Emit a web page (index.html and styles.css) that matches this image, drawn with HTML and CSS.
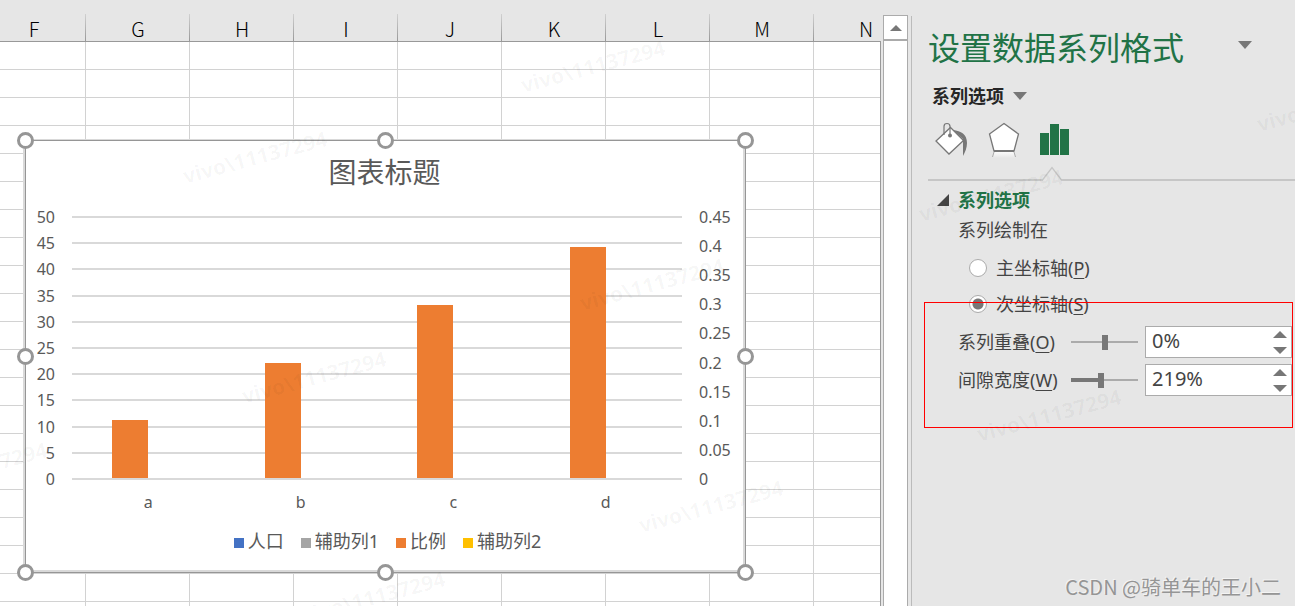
FILE: index.html
```html
<!DOCTYPE html>
<html lang="zh-CN">
<head>
<meta charset="utf-8">
<title>设置数据系列格式</title>
<link rel="stylesheet" href="styles.css">
</head>
<body>
<div class="app">
  <main class="sheet">
    <div class="col-heads">
      <span>F</span><span>G</span><span>H</span><span>I</span><span>J</span><span>K</span><span>L</span><span>M</span><span>N</span>
    </div>
    <div class="cells">
      <section class="chart" aria-label="图表标题">
        <h2 class="chart-title">图表标题</h2>
        <div class="plot-row">
          <div class="axis axis-left">
            <span>50</span><span>45</span><span>40</span><span>35</span><span>30</span><span>25</span><span>20</span><span>15</span><span>10</span><span>5</span><span>0</span>
          </div>
          <div class="plot">
            <div class="gridlines"><i></i><i></i><i></i><i></i><i></i><i></i><i></i><i></i><i></i><i></i><i></i></div>
            <div class="bars">
              <div class="slot"><div class="bar" style="height:22%"></div></div>
              <div class="slot"><div class="bar" style="height:44%"></div></div>
              <div class="slot"><div class="bar" style="height:66%"></div></div>
              <div class="slot"><div class="bar" style="height:88%"></div></div>
            </div>
          </div>
          <div class="axis axis-right">
            <span>0.45</span><span>0.4</span><span>0.35</span><span>0.3</span><span>0.25</span><span>0.2</span><span>0.15</span><span>0.1</span><span>0.05</span><span>0</span>
          </div>
        </div>
        <div class="categories"><span>a</span><span>b</span><span>c</span><span>d</span></div>
        <ul class="legend">
          <li><i class="key blue"></i>人口</li>
          <li><i class="key gray"></i>辅助列1</li>
          <li><i class="key orange"></i>比例</li>
          <li><i class="key yellow"></i>辅助列2</li>
        </ul>
        <i class="handle top start"></i><i class="handle top mid"></i><i class="handle top end"></i>
        <i class="handle center start"></i><i class="handle center end"></i>
        <i class="handle bottom start"></i><i class="handle bottom mid"></i><i class="handle bottom end"></i>
      </section>
    </div>
  </main>

  <div class="scrollbar">
    <button type="button" class="scroll-up" aria-label="向上滚动"><svg width="12" height="6" viewBox="0 0 12 6"><path d="M0 6 6 0l6 6z" fill="#777"/></svg></button>
    <div class="scroll-track"></div>
  </div>

  <aside class="pane">
    <header class="pane-head">
      <h1>设置数据系列格式</h1>
      <button type="button" class="plain" aria-label="任务窗格选项"><svg width="14" height="8" viewBox="0 0 14 8"><path d="M0 0h14L7 8z" fill="#777"/></svg></button>
    </header>
    <button type="button" class="plain options-menu">系列选项 <svg width="14" height="8" viewBox="0 0 14 8"><path d="M0 0h14L7 8z" fill="#777"/></svg></button>
    <nav class="tabs">
      <button type="button" class="plain" aria-label="填充与线条">
        <svg width="33" height="36" viewBox="0 0 33 36"><path d="M18 8c8 1 14 4 14 13 0 5-2 9-4 13V17z" fill="#777"/><path d="M15.500 5.500 28.500 18.500 14 32 1 19z" fill="#fff" stroke="#777" stroke-width="1.300"/><path d="M9 13V4.500Q9 1.500 12 1.500T15 4.500V13" fill="none" stroke="#777" stroke-width="1.200"/><circle cx="15" cy="13.500" r="2" fill="#777"/></svg>
      </button>
      <button type="button" class="plain" aria-label="效果">
        <svg width="32" height="36" viewBox="0 0 32 36"><defs><linearGradient id="fade" x1="0" y1="0" x2="0" y2="1"><stop offset="0" stop-color="#fff"/><stop offset="1" stop-color="#e6e6e6"/></linearGradient></defs><path d="M6 29h20l2 7H4z" fill="url(#fade)"/><path d="M6 30l-1.500 5M26 30l1.500 5" stroke="#aaa"/><path d="M16 1.500 30.500 12 26 29H6L1.500 12z" fill="#fff" stroke="#777" stroke-width="1.300"/><path d="M6 29h20" stroke="#777" stroke-width="2"/></svg>
      </button>
      <button type="button" class="plain" aria-label="系列选项">
        <svg width="30" height="36" viewBox="0 0 30 36"><path d="M0 11h9v22H0zM10 2h9v31h-9zM20 7h9v26h-9z" fill="#217346"/></svg>
      </button>
    </nav>
    <div class="divider"><svg width="22" height="15" viewBox="0 0 22 15"><path d="M0 15V13h1L11 1l10 12h1v2z" fill="#e6e6e6"/><path d="M0 14h1.500L11 1.500 20.500 14H22" fill="none" stroke="#c6c6c6" stroke-width="1.300"/></svg></div>

    <section class="group">
      <button type="button" class="plain group-head"><svg width="12" height="12" viewBox="0 0 12 12"><path d="M12 0v12H0z" fill="#444"/></svg>系列选项</button>
      <fieldset class="radios">
        <legend>系列绘制在</legend>
        <label><input type="radio" name="axis">主坐标轴(<u>P</u>)</label>
        <label><input type="radio" name="axis" checked>次坐标轴(<u>S</u>)</label>
      </fieldset>
      <div class="fields">
        <label for="overlap">系列重叠(<u>O</u>)</label>
        <input class="slider" type="range" min="-100" max="100" value="0" aria-label="系列重叠滑块">
        <div class="spin">
          <input id="overlap" type="text" value="0%">
          <div class="steps">
            <button type="button" class="plain" aria-label="增加重叠"><svg width="14" height="7" viewBox="0 0 14 7"><path d="M0 7 7 0l7 7z" fill="#777"/></svg></button>
            <button type="button" class="plain" aria-label="减少重叠"><svg width="14" height="7" viewBox="0 0 14 7"><path d="M0 0h14L7 7z" fill="#777"/></svg></button>
          </div>
        </div>
        <label for="gapwidth">间隙宽度(<u>W</u>)</label>
        <input class="slider filled" type="range" min="0" max="500" value="219" aria-label="间隙宽度滑块">
        <div class="spin">
          <input id="gapwidth" type="text" value="219%">
          <div class="steps">
            <button type="button" class="plain" aria-label="增加间隙"><svg width="14" height="7" viewBox="0 0 14 7"><path d="M0 7 7 0l7 7z" fill="#777"/></svg></button>
            <button type="button" class="plain" aria-label="减少间隙"><svg width="14" height="7" viewBox="0 0 14 7"><path d="M0 0h14L7 7z" fill="#777"/></svg></button>
          </div>
        </div>
      </div>
      <div class="highlight"></div>
    </section>
    <footer class="credit">CSDN @骑单车的王小二</footer>
  </aside>

  <div class="marks" aria-hidden="true">
    <span class="m1">vivo\11137294</span><span class="m2">vivo\11137294</span><span class="m3">vivo\11137294</span><span class="m4">vivo\11137294</span><span class="m5">vivo\11137294</span><span class="m6">vivo\11137294</span><span class="m7">vivo\11137294</span><span class="m8">vivo\11137294</span><span class="m9">vivo\11137294</span><span class="m10">vivo\11137294</span>
  </div>
</div>
</body>
</html>
```
FILE: styles.css
```css
* { box-sizing: border-box; }

body {
  margin: 0;
  background: #e6e6e6;
  color: #444;
  font: 18px/24px "Noto Sans", "Noto Sans CJK SC", sans-serif;
}

.app {
  position: relative;
  display: flex;
  min-height: 100vh;
  overflow: hidden;
}

.plain {
  display: flex;
  align-items: center;
  padding: 0;
  border: 0;
  background: none;
  color: inherit;
  font: inherit;
}

/* Worksheet */
.sheet {
  flex: 1;
  min-width: 0;
  display: flex;
  flex-direction: column;
  padding-top: 14px;
  overflow: hidden;
}

.col-heads {
  display: flex;
  margin-right: 2px;
  border-bottom: 1px solid #999;
  color: #000;
  font: 300 20px/27px "Noto Sans CJK SC", sans-serif;
}

.col-heads span {
  flex: none;
  width: 104px;
  padding-top: 1px;
  height: 27px;
  line-height: 28px;
  text-align: center;
  background: linear-gradient(#d0d0d0, #999) right / 1px 100% no-repeat;
}

.col-heads span:first-child { margin-left: -18px; }
.col-heads span:last-child { background: none; }

.cells {
  position: relative;
  flex: 1;
  margin-right: 2px;
  border-right: 1px solid #999;
  background:
    repeating-linear-gradient(transparent 0 27px, #d2d2d2 27px 28px),
    repeating-linear-gradient(90deg, transparent 0 103px, #d2d2d2 103px 104px) -18px 0 / 1872px 100%,
    #fff;
}

/* Chart */
.chart {
  position: absolute;
  left: 25px;
  top: 98px;
  width: 721px;
  height: 433px;
  padding-top: 14px;
  border: 1px solid #969696;
  background: #fff;
  box-shadow: -2px -1px 0 #d9d9d9, inset -2px -2px 0 #d9d9d9;
  color: #595959;
}

.chart-title {
  margin: 0 2px 29px 0;
  text-align: center;
  font: 28px/32px "Noto Sans CJK SC", sans-serif;
}

.plot-row {
  display: flex;
  align-items: center;
}

.axis {
  display: flex;
  flex-direction: column;
  justify-content: space-between;
  height: 282px;
  margin: -16px 0;
  font-size: 16px;
  line-height: 20px;
}

.axis-left { width: 46px; padding-right: 17px; text-align: right; }
.axis-right { width: 63px; padding-left: 17px; }

.plot { flex: 1; display: grid; height: 264px; }
.gridlines, .bars { grid-area: 1 / 1; display: flex; min-height: 0; }
.gridlines { flex-direction: column; justify-content: space-between; }
.gridlines i { height: 2px; background: #d9d9d9; }
.bars { padding-bottom: 2px; }

.slot {
  flex: 1;
  display: flex;
  align-items: flex-end;
  justify-content: flex-end;
  padding-right: 12.5%;
}

.bar { width: 36px; background: #ed7d31; }

.categories {
  display: flex;
  margin: 12px 63px 0 46px;
  font-size: 16px;
  line-height: 20px;
  text-align: center;
}

.categories span { flex: 1; }

.legend {
  display: flex;
  justify-content: center;
  gap: 17px;
  margin: 17px 0 0;
  padding: 0 0 0 4px;
  list-style: none;
}

.legend li { display: flex; align-items: center; gap: 4px; }
.key { width: 10px; height: 10px; margin-top: 3px; }
.blue { background: #4472c4; }
.gray { background: #a5a5a5; }
.orange { background: #ed7d31; }
.yellow { background: #ffc000; }

.handle {
  position: absolute;
  width: 17px;
  height: 17px;
  border: 3px solid #969696;
  border-radius: 50%;
  background: #fff;
}

.top { top: -9px; }
.center { top: calc(50% - 9px); }
.bottom { bottom: -9px; }
.start { left: -9px; }
.mid { left: calc(50% - 9px); }
.end { right: -9px; }

/* Scrollbar */
.scrollbar {
  display: flex;
  flex-direction: column;
  width: 25px;
  padding-top: 15px;
}

.scroll-up {
  display: grid;
  place-items: center;
  height: 25px;
  padding: 0;
  border: 1px solid #ababab;
  background: #fff;
}

.scroll-track { flex: 1; border: 1px solid #ababab; border-bottom: 0; background: #fff; }

/* Format pane */
.pane {
  display: flex;
  flex-direction: column;
  width: 384px;
  margin: 16px 0 0 3px;
  border-left: 1px solid #bbb;
}

.pane-head {
  display: flex;
  align-items: center;
  justify-content: space-between;
  padding: 10px 43px 0 16px;
}

.pane-head h1 {
  margin: 0;
  color: #217346;
  font: 32px/40px "Noto Sans CJK SC", sans-serif;
}

.pane-head .plain { margin-bottom: 2px; }

.options-menu {
  gap: 9px;
  margin: 18px 0 0 20px;
  color: #262626;
  font-weight: 700;
}

.tabs { display: flex; gap: 20px; margin: 14px 0 0 23px; }

.divider {
  display: flex;
  align-items: flex-end;
  height: 15px;
  margin: 8px 0 0 16px;
  padding-left: 113px;
  background: linear-gradient(#c6c6c6, #c6c6c6) bottom / 100% 2px no-repeat;
}

.group { position: relative; padding: 7px 3px 0 46px; }

.group-head {
  gap: 9px;
  margin-left: -21px;
  color: #217346;
  font-weight: 700;
}

.radios {
  display: flex;
  flex-direction: column;
  gap: 12px;
  margin: 6px 0 0;
  padding: 14px 0 0 11px;
  border: 0;
}

.radios legend { margin: 0 0 0 -11px; padding: 0; }
.radios label { display: flex; align-items: center; }

.radios input {
  appearance: none;
  width: 18px;
  height: 18px;
  margin: 0 9px 0 0;
  border: 1px solid #ababab;
  border-radius: 50%;
  background: #fff;
}

.radios input:checked { background: radial-gradient(circle, #777 0 5px, #fff 6px); }

u { text-underline-offset: 3px; text-decoration-thickness: 1px; }

.fields {
  display: grid;
  grid-template-columns: 106px 67px minmax(0, 1fr);
  align-items: center;
  column-gap: 7px;
  row-gap: 6px;
  margin-top: 10px;
}

.slider {
  appearance: none;
  width: 100%;
  height: 16px;
  margin: 0;
  background: linear-gradient(#ababab, #ababab) center / 100% 2px no-repeat;
}

.slider.filled {
  background:
    linear-gradient(#777, #777) left / 44% 4px no-repeat,
    linear-gradient(#ababab, #ababab) center / 100% 2px no-repeat;
}

.slider::-webkit-slider-thumb {
  appearance: none;
  width: 6px;
  height: 15px;
  background: #777;
}

.spin {
  display: flex;
  height: 32px;
  border: 1px solid #ababab;
  background: #fff;
}

.spin input {
  flex: 1;
  min-width: 0;
  padding: 0 0 2px 6px;
  border: 0;
  background: none;
  color: #444;
  font: 20px/24px "Noto Sans", sans-serif;
}

.steps {
  display: flex;
  flex-direction: column;
  justify-content: space-between;
  padding: 4px 4px 3px 0;
}

.highlight {
  position: absolute;
  left: 12px;
  right: 2px;
  top: 121px;
  height: 126px;
  border: 1px solid #f00;
}

.credit {
  margin: auto 14px 6px auto;
  color: #959595;
  font: 20px/26px "Noto Sans CJK SC", sans-serif;
  text-shadow: -1px -1px 0 #f4f4f4;
}

/* Tilted watermarks over the whole window */
.marks { position: absolute; inset: 0; overflow: hidden; pointer-events: none; }

.marks span {
  position: absolute;
  width: 160px;
  margin: -12px 0 0 -80px;
  color: rgba(0, 0, 0, 0.04);
  font-size: 21px;
  font-weight: 700;
  text-align: center;
  transform: rotate(-15deg);
}

.m1 { left: 593px; top: 66px; }
.m2 { left: 255px; top: 157px; }
.m3 { left: 652px; top: 284px; }
.m4 { left: 314px; top: 377px; }
.m5 { left: 711px; top: 506px; }
.m6 { left: 373px; top: 597px; }
.m7 { left: -25px; top: 468px; }
.m8 { left: 991px; top: 195px; }
.m9 { left: 1049px; top: 415px; }
.m10 { left: 1329px; top: 105px; }
```
